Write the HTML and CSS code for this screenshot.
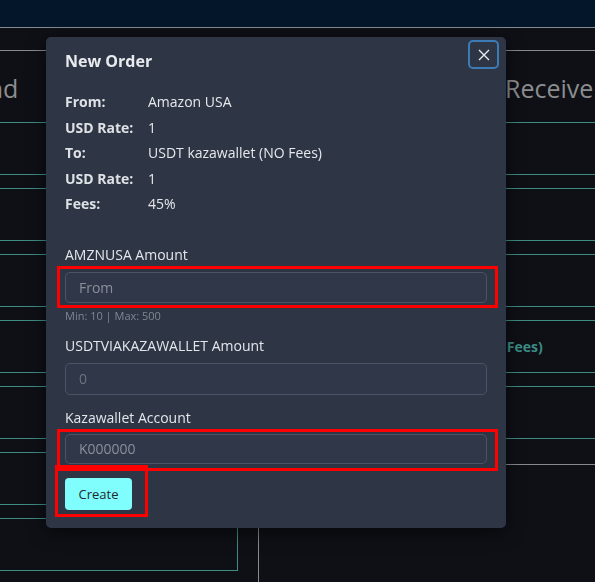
FILE: index.html
```html
<!DOCTYPE html>
<html lang="en">
<head>
<meta charset="utf-8">
<title>New Order</title>
<link rel="stylesheet" href="styles.css">
</head>
<body>
<div class="topbar"></div>
<div class="main">
  <section class="col col-left">
    <h2 class="col-title">Send</h2>
    <div class="item"></div>
    <div class="item"></div>
    <div class="item"></div>
    <div class="item"></div>
    <div class="item"></div>
    <div class="item"></div>
    <div class="item"></div>
  </section>
  <section class="col col-right">
    <h2 class="col-title col-title-right">Receive</h2>
    <div class="item"></div>
    <div class="item"></div>
    <div class="item"></div>
    <div class="item"><span class="item-text">USDT kazawallet (NO Fees)</span></div>
    <div class="item"></div>
    <div class="divider"></div>
  </section>
</div>

<div class="backdrop">
  <div class="modal">
    <div class="modal-header">
      <h1 class="modal-title">New Order</h1>
      <button class="close" type="button" aria-label="Close">
        <svg width="12" height="12" viewBox="0 0 12 12"><path d="M1 1 L11 11 M11 1 L1 11" stroke="#e8ebf0" stroke-width="1.4" fill="none"/></svg>
      </button>
    </div>
    <div class="modal-body">
      <div class="info">
        <div class="info-label">From:</div><div class="info-value">Amazon USA</div>
        <div class="info-label">USD Rate:</div><div class="info-value">1</div>
        <div class="info-label">To:</div><div class="info-value">USDT kazawallet (NO Fees)</div>
        <div class="info-label">USD Rate:</div><div class="info-value">1</div>
        <div class="info-label">Fees:</div><div class="info-value">45%</div>
      </div>

      <label class="field-label field-first">AMZNUSA Amount</label>
      <div class="hl hl-input">
        <input class="input" type="text" placeholder="From">
      </div>
      <div class="hint">Min: 10 | Max: 500</div>

      <label class="field-label field-second">USDTVIAKAZAWALLET Amount</label>
      <input class="input input-plain" type="text" placeholder="0">

      <label class="field-label field-third">Kazawallet Account</label>
      <div class="hl hl-input hl-account">
        <input class="input input-account" type="text" placeholder="K000000">
      </div>

      <div class="hl hl-button">
        <button class="create" type="button">Create</button>
      </div>
    </div>
  </div>
</div>
</body>
</html>
```

FILE: styles.css
```css
* { box-sizing: border-box; }

html, body {
  margin: 0;
  padding: 0;
}

body {
  width: 595px;
  height: 582px;
  overflow: hidden;
  background: #0e1016;
  font-family: "Open Sans", "Liberation Sans", sans-serif;
}

.topbar {
  height: 28px;
  background: #04162a;
  border-bottom: 1px solid #868b90;
}

.main {
  display: flex;
  padding-top: 22px;
  height: 554px;
  overflow: hidden;
}

.col {
  border-top: 1px solid #868b90;
}

.col-left {
  flex: none;
  width: 298px;
  margin-left: -60px;
}

.col-right {
  flex: none;
  width: 337px;
  margin-left: 20px;
  border-left: 1px solid #868b90;
}

.col-title {
  margin: 0;
  height: 71px;
  padding-top: 23px;
  font-size: 25px;
  line-height: 28px;
  font-weight: 500;
  color: #8c8d8f;
  padding-left: 20px;
  white-space: nowrap;
}

.col-title-right {
  padding-left: 246px;
}

.item {
  height: 53px;
  margin-bottom: 13px;
  border: 1px solid #3e8c84;
  display: flex;
  align-items: center;
}

.col-right .item {
  border-right: none;
}

.item-text {
  padding-left: 96px;
  font-size: 14px;
  font-weight: 700;
  color: #3c8c86;
  white-space: nowrap;
}

.divider {
  margin-top: 25px;
  border-top: 1px solid #868b90;
}

.backdrop {
  position: fixed;
  inset: 0;
}

.modal {
  margin: 37px 0 0 46px;
  width: 460px;
  height: 491px;
  background: #2e3646;
  border-radius: 5px;
  box-shadow: 0 4px 18px rgba(0, 0, 0, 0.55);
  color: #e4e6ea;
}

.modal-header {
  display: flex;
  justify-content: space-between;
  align-items: flex-start;
  padding: 3px 7px 0 19px;
}

.modal-title {
  margin: 11px 0 0;
  font-size: 16px;
  line-height: 20px;
  font-weight: 700;
  color: #e9ebee;
}

.close {
  width: 31px;
  height: 29px;
  padding: 0;
  border: 2px solid #3d7bb7;
  border-radius: 5px;
  background: transparent;
  display: flex;
  align-items: center;
  justify-content: center;
}

.modal-body {
  padding: 0 19px 0 19px;
  display: flex;
  flex-direction: column;
  align-items: stretch;
}

.info {
  display: grid;
  grid-template-columns: 83px 1fr;
  grid-auto-rows: 25.5px;
  align-items: center;
  margin-top: 18px;
  font-size: 14px;
}

.info-label {
  font-weight: 700;
  color: #dfe1e5;
}

.info-value {
  font-weight: 500;
  color: #e6e8eb;
}

.field-label {
  display: block;
  font-size: 14px;
  line-height: 18px;
  font-weight: 500;
  color: #e4e6ea;
}

.field-first { margin-top: 29px; margin-bottom: 2px; }
.field-second { margin-top: 14px; margin-bottom: 8px; }
.field-third { margin-top: 14px; margin-bottom: 2px; }

.hl {
  border: 3px solid #ff0000;
}

.hl-input {
  margin: 0 -11px 0 -8px;
  padding: 3px 8px 2px 5px;
}

.hl-account {
  padding: 2px 8px 4px 5px;
}

.input {
  display: block;
  width: 100%;
  height: 31px;
  margin: 0;
  padding: 0 13px;
  background: #2f3748;
  border: 1px solid #4b5365;
  border-radius: 5px;
  font-family: inherit;
  font-size: 14px;
  color: #e4e6ea;
  outline: none;
}

.input::placeholder {
  color: #8a909b;
}

.input-plain {
  height: 32px;
}

.input-plain::placeholder {
  color: #6c7380;
}

.input-account {
  height: 30px;
}

.hint {
  margin-top: 1px;
  font-size: 11px;
  line-height: 14px;
  color: #7f8692;
}

.hl-button {
  align-self: flex-start;
  margin: -6px 0 0 -10px;
  padding: 10px 13px 4px 7px;
}

.create {
  display: block;
  width: 67px;
  height: 32px;
  padding: 0;
  border: none;
  border-radius: 4px;
  background: #80fdfd;
  font-family: inherit;
  font-size: 13px;
  font-weight: 500;
  color: #1f2a30;
}
```
